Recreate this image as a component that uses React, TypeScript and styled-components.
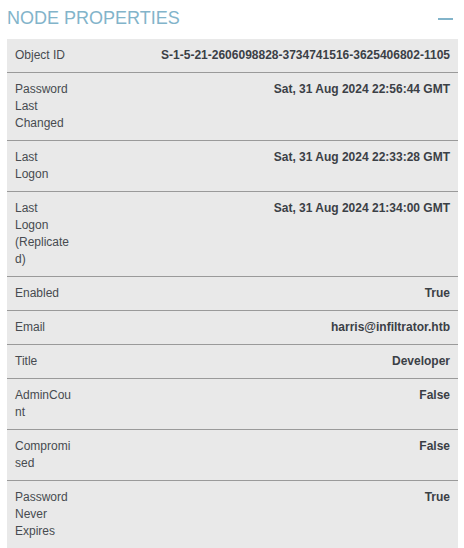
import React, { useState } from 'react';
import styled, { createGlobalStyle } from 'styled-components';

type Property = { label: string; value: string };

const properties: Property[] = [
  { label: 'Object ID', value: 'S-1-5-21-2606098828-3734741516-3625406802-1105' },
  { label: 'Password Last Changed', value: 'Sat, 31 Aug 2024 22:56:44 GMT' },
  { label: 'Last Logon', value: 'Sat, 31 Aug 2024 22:33:28 GMT' },
  { label: 'Last Logon (Replicated)', value: 'Sat, 31 Aug 2024 21:34:00 GMT' },
  { label: 'Enabled', value: 'True' },
  { label: 'Email', value: 'harris@infiltrator.htb' },
  { label: 'Title', value: 'Developer' },
  { label: 'AdminCount', value: 'False' },
  { label: 'Compromised', value: 'False' },
  { label: 'Password Never Expires', value: 'True' },
];

export default function App() {
  const [isOpen, setIsOpen] = useState(true);

  return (
    <>
      <GlobalStyle />
      <Panel>
        <Header onClick={() => setIsOpen(!isOpen)}>
          <Title>NODE PROPERTIES</Title>
          <Collapse />
        </Header>
        {isOpen && (
          <Table>
            {properties.map((item) => (
              <Row key={`prop-${item.label}`}>
                <Label>{item.label}</Label>
                <Value>{item.value}</Value>
              </Row>
            ))}
          </Table>
        )}
      </Panel>
    </>
  );
}

const GlobalStyle = createGlobalStyle`
  body {
    margin: 0;
    background: #ffffff;
    font-family: 'Liberation Sans', Arial, sans-serif;
  }
`;
const Panel = styled.div`
  width: 464px;
  padding: 0 6px 0 7px;
  box-sizing: border-box;
`;
const Header = styled.div`
  height: 39px;
  display: flex;
  flex-direction: row;
  align-items: center;
  justify-content: space-between;
  padding-bottom: 3px;
  box-sizing: border-box;
  cursor: pointer;
`;
const Title = styled.span`
  font-size: 18px;
  color: #82b4ca;
`;
const Collapse = styled.span`
  width: 15px;
  height: 2px;
  margin-right: 5px;
  margin-top: 1px;
  background-color: #82b4ca;
`;
const Table = styled.div`
  display: flex;
  flex-direction: column;
  background-color: #e9e9e9;
`;
const Row = styled.div`
  display: flex;
  flex-direction: row;
  justify-content: space-between;
  gap: 12px;
  padding: 8px 8px;
  font-size: 12px;
  line-height: 17px;
  border-bottom: 1px solid #9a9a9a;
  &:last-child {
    border-bottom: none;
  }
`;
const Label = styled.div`
  width: 58px;
  flex-shrink: 0;
  color: #474b50;
  overflow-wrap: break-word;
`;
const Value = styled.div`
  font-weight: 700;
  color: #3b4046;
  text-align: right;
`;
